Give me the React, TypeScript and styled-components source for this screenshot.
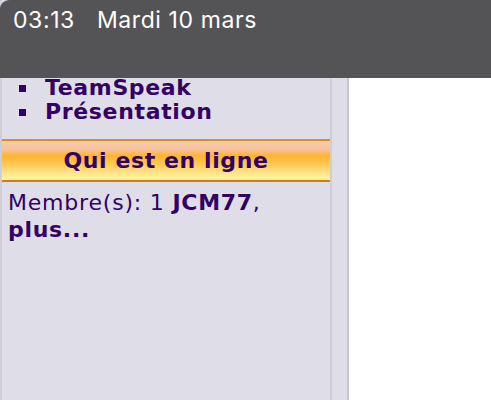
import React from "react";
import styled, { createGlobalStyle } from "styled-components";

const Global = createGlobalStyle`
  html, body { margin: 0; padding: 0; background: #ffffff; }
  body { width: 491px; height: 400px; overflow: hidden; }
`;

const StatusBar = styled.div`
  position: fixed;
  top: 0;
  left: 0;
  right: 0;
  height: 78px;
  background: #545356;
  border-top-left-radius: 9px;
  display: flex;
  align-items: flex-start;
  gap: 22px;
  padding: 5px 0 0 13px;
  box-sizing: border-box;
  color: #ffffff;
  font-family: Inter, "Noto Sans", sans-serif;
  font-size: 23px;
  letter-spacing: 0.6px;
  line-height: 30px;
  z-index: 10;
`;

const Page = styled.div`
  display: flex;
  height: 400px;
`;

const Sidebar = styled.div`
  width: 347px;
  background: #dfdee8;
  border-right: 2px solid #c6c5cb;
  display: flex;
`;

const Column = styled.div`
  width: 328px;
  border-left: 2px solid #cfced7;
  border-right: 2px solid #cfced7;
  font-family: "DejaVu Sans", Verdana, sans-serif;
  color: #330066;
  display: flex;
  flex-direction: column;
  overflow: hidden;
`;

const Menu = styled.ul`
  margin: 52px 0 0 0;
  padding: 0 0 0 17px;
  list-style: none;
`;

const MenuItem = styled.li`
  display: flex;
  align-items: center;
  gap: 19px;
  font-size: 22px;
  font-weight: bold;
  letter-spacing: 0.65px;
  line-height: 24px;
  &::before {
    content: "";
    width: 7px;
    height: 7px;
    background: #330066;
    flex: none;
  }
`;

const BlockHeader = styled.div`
  margin-top: 15px;
  height: 43px;
  box-sizing: border-box;
  border-top: 2px solid #d98d2a;
  border-bottom: 2px solid #c5801a;
  background: linear-gradient(
    to bottom,
    #f7c9ab 0%,
    #f8c39a 22%,
    #fdb42c 38%,
    #fdc958 60%,
    #fde890 85%,
    #fef3a2 100%
  );
  display: flex;
  align-items: center;
  justify-content: center;
  font-size: 22px;
  font-weight: bold;
  letter-spacing: 0.6px;
`;

const Online = styled.div`
  padding: 7px 6px 0 6px;
  font-size: 22px;
  line-height: 27px;
  letter-spacing: 0.8px;
`;

const Strong = styled.b`
  font-weight: bold;
  letter-spacing: 0.7px;
`;

export default function App() {
  return (
    <>
      <Global />
      <StatusBar>
        <span>03:13</span>
        <span>Mardi 10 mars</span>
      </StatusBar>
      <Page>
        <Sidebar>
          <Column>
            <Menu>
              <MenuItem>Forum</MenuItem>
              <MenuItem>TeamSpeak</MenuItem>
              <MenuItem>Présentation</MenuItem>
            </Menu>
            <BlockHeader>Qui est en ligne</BlockHeader>
            <Online>
              Membre(s): 1 <Strong>JCM77</Strong>, <Strong>plus...</Strong>
            </Online>
          </Column>
        </Sidebar>
      </Page>
    </>
  );
}
